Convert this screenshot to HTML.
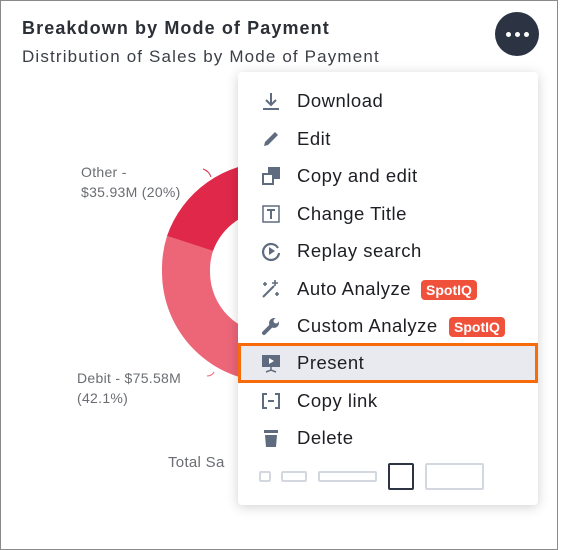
<!DOCTYPE html>
<html><head><style>
body{margin:0;width:561px;height:550px;background:#fff;position:relative;overflow:hidden;font-family:"Liberation Sans",sans-serif}
.frame{position:absolute;left:0;top:0;width:556px;height:548px;border:1px solid #8a8a8a}
.t{position:absolute;left:22px;top:18px;font-size:18px;font-weight:bold;color:#2b2f36;letter-spacing:1.1px}
.s{position:absolute;left:22px;top:47px;font-size:17px;color:#3b3f46;letter-spacing:1.15px}
.more{position:absolute;left:495px;top:12px;width:44px;height:44px;border-radius:50%;background:#2c3444}
.more i{position:absolute;top:20px;width:5px;height:5px;border-radius:50%;background:#fff}
.lbl{position:absolute;font-size:14px;color:#6a6d72;line-height:20px;letter-spacing:0.3px}
.menu{position:absolute;left:238px;top:72px;width:300px;height:433px;background:#fff;border-radius:4px;box-shadow:0 2px 12px rgba(0,0,0,.18)}
.it{position:absolute;left:0;width:300px;height:37px;font-size:18.5px;letter-spacing:0.5px;color:#1d1f24}
.it span.tx{position:absolute;left:59px;top:8px}
.it svg{position:absolute;left:22px;top:8px}
.badge{position:absolute;top:10px;height:20px;line-height:20px;padding:0 5px;background:#f0513b;color:#fff;font-weight:bold;font-size:14px;letter-spacing:0;border-radius:4px}
.hl{position:absolute;left:238px;top:343px;width:294px;height:34px;border:3px solid #f76b0a;background:#e8eaf0}
.sz{position:absolute;border:2px solid #d3d8e0;border-radius:2px;box-sizing:border-box}
</style></head><body>
<div class="frame"></div>
<svg style="position:absolute;left:0;top:0" width="561" height="550">
<path d="M162,272 A110,110 0 0 1 167,236 L213,251 A62,62 0 0 0 210,272 Z" fill="#ec6678"/>
<path d="M167,236 A110,110 0 0 1 272,162 L272,210 A62,62 0 0 0 213,251 Z" fill="#e0294a"/>
<path d="M162,272 A110,110 0 0 0 272,382 L272,334 A62,62 0 0 1 210,272 Z" fill="#ec6678"/>
<path d="M203,169 q6,2 8,8" stroke="#e0294a" fill="none"/>
<path d="M207,376 q5,0 7,-4" stroke="#ec6678" fill="none"/>
</svg>
<div class="t">Breakdown by Mode of Payment</div>
<div class="s">Distribution of Sales by Mode of Payment</div>
<div class="more"><i style="left:11px"></i><i style="left:20px"></i><i style="left:29px"></i></div>
<div class="lbl" style="left:81px;top:162px">Other -<br>$35.93M (20%)</div>
<div class="lbl" style="left:77px;top:368px">Debit - $75.58M<br>(42.1%)</div>
<div class="lbl" style="left:168px;top:453px;font-size:15px">Total Sa</div>
<div class="menu"></div>
<div class="hl"></div>
<div style="position:absolute;left:238px;top:72px;width:300px;height:433px">
<div class="it" style="top:10px"><svg width="22" height="22"><path d="M11,3v12M6,10l5,5 5,-5M3,19h16" stroke="#5f6b7e" stroke-width="2" fill="none"/></svg><span class="tx">Download</span></div>
<div class="it" style="top:48px"><svg width="22" height="22"><path d="M4,18l1,-4 10,-10 3,3 -10,10z" fill="#5f6b7e"/></svg><span class="tx">Edit</span></div>
<div class="it" style="top:85px"><svg width="22" height="22"><rect x="8" y="2" width="12" height="12" fill="#5f6b7e"/><rect x="3" y="9" width="10" height="10" fill="#fff" stroke="#5f6b7e" stroke-width="2"/></svg><span class="tx">Copy and edit</span></div>
<div class="it" style="top:123px"><svg width="22" height="22"><rect x="3" y="3" width="16" height="16" fill="none" stroke="#5f6b7e" stroke-width="1.5"/><path d="M7,7h8M11,7v9" stroke="#5f6b7e" stroke-width="2"/></svg><span class="tx">Change Title</span></div>
<div class="it" style="top:160px"><svg width="22" height="22"><path d="M18,8A8,8 0 1 0 19,13" stroke="#5f6b7e" stroke-width="2.2" fill="none"/><path d="M9,7l6,4 -6,4z" fill="#5f6b7e"/></svg><span class="tx">Replay search</span></div>
<div class="it" style="top:198px"><svg width="22" height="22"><path d="M3,19l11,-11" stroke="#5f6b7e" stroke-width="2"/><path d="M15,2v6M12,5h6M5,4v4M3,6h4M17,14v4M15,16h4" stroke="#5f6b7e" stroke-width="1.6"/></svg><span class="tx">Auto Analyze</span><span class="badge" style="left:183px">SpotIQ</span></div>
<div class="it" style="top:235px"><svg width="22" height="22"><path d="M4,18l8,-8" stroke="#5f6b7e" stroke-width="4" stroke-linecap="round"/><circle cx="14" cy="8" r="5" fill="#5f6b7e"/><circle cx="16" cy="6" r="2.5" fill="#fff"/></svg><span class="tx">Custom Analyze</span><span class="badge" style="left:211px">SpotIQ</span></div>
<div class="it" style="top:272px"><svg width="22" height="22"><rect x="2" y="3" width="18" height="12" fill="#5f6b7e"/><path d="M9,6l5,3 -5,3z" fill="#fff"/><path d="M11,15v4M6,20l5,-2 5,2" stroke="#5f6b7e" stroke-width="1.5" fill="none"/></svg><span class="tx">Present</span></div>
<div class="it" style="top:310px"><svg width="22" height="22"><path d="M7,4H3v14h4M15,4h4v14h-4M8,11h6" stroke="#5f6b7e" stroke-width="2" fill="none"/></svg><span class="tx">Copy link</span></div>
<div class="it" style="top:347px"><svg width="22" height="22"><rect x="4" y="3" width="14" height="3" fill="#5f6b7e"/><path d="M5,8h12l-1,12h-10z" fill="#5f6b7e"/></svg><span class="tx">Delete</span></div>
</div>
<div class="sz" style="left:259px;top:471px;width:12px;height:11px"></div>
<div class="sz" style="left:281px;top:471px;width:26px;height:11px"></div>
<div class="sz" style="left:318px;top:471px;width:59px;height:11px"></div>
<div class="sz" style="left:388px;top:463px;width:26px;height:27px;border-color:#2c3444;border-width:2.5px"></div>
<div class="sz" style="left:425px;top:463px;width:59px;height:27px"></div>
</body></html>
